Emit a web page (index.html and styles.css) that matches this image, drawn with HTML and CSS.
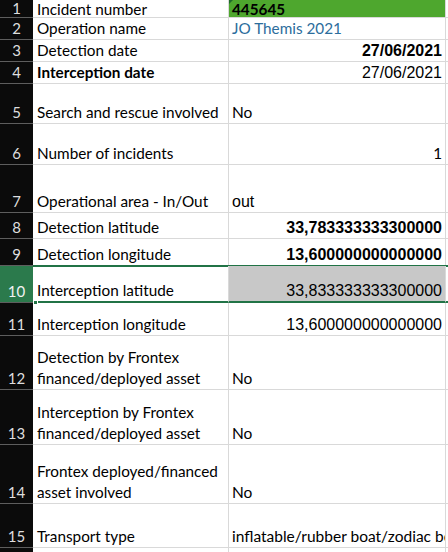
FILE: index.html
```html
<!DOCTYPE html>
<html>
<head>
<meta charset="utf-8">
<link rel="stylesheet" href="styles.css">
</head>
<body>
<div class="sheet">
  <div class="row r1">
    <div class="hdr">1</div>
    <div class="cell a">Incident number</div>
    <div class="cell b fill-green bold num-a"><span class="tri"></span>445645</div>
    <div class="cell c"></div>
  </div>
  <div class="row r2">
    <div class="hdr">2</div>
    <div class="cell a">Operation name</div>
    <div class="cell b blue">JO Themis 2021</div>
    <div class="cell c"></div>
  </div>
  <div class="row r3">
    <div class="hdr">3</div>
    <div class="cell a">Detection date</div>
    <div class="cell b right arial bold">27/06/2021</div>
    <div class="cell c"></div>
  </div>
  <div class="row r4">
    <div class="hdr">4</div>
    <div class="cell a bold">Interception date</div>
    <div class="cell b right arial">27/06/2021</div>
    <div class="cell c"></div>
  </div>
  <div class="row r5">
    <div class="hdr">5</div>
    <div class="cell a">Search and rescue involved</div>
    <div class="cell b cal">No</div>
    <div class="cell c"></div>
  </div>
  <div class="row r6">
    <div class="hdr">6</div>
    <div class="cell a">Number of incidents</div>
    <div class="cell b right">1</div>
    <div class="cell c"></div>
  </div>
  <div class="row r7">
    <div class="hdr">7</div>
    <div class="cell a">Operational area - In/Out</div>
    <div class="cell b arial">out</div>
    <div class="cell c"></div>
  </div>
  <div class="row r8">
    <div class="hdr">8</div>
    <div class="cell a">Detection latitude</div>
    <div class="cell b right arial bold">33,783333333300000</div>
    <div class="cell c"></div>
  </div>
  <div class="row r9">
    <div class="hdr">9</div>
    <div class="cell a">Detection longitude</div>
    <div class="cell b right arial bold">13,600000000000000</div>
    <div class="cell c"></div>
  </div>
  <div class="row r10 selected">
    <div class="hdr hdr-sel">10</div>
    <div class="cell a">Interception latitude</div>
    <div class="cell b right arial fill-grey">33,833333333300000</div>
    <div class="cell c"></div>
    <span class="handle"></span>
  </div>
  <div class="row r11">
    <div class="hdr">11</div>
    <div class="cell a">Interception longitude</div>
    <div class="cell b right arial">13,600000000000000</div>
    <div class="cell c"></div>
  </div>
  <div class="row r12">
    <div class="hdr">12</div>
    <div class="cell a">Detection by Frontex<br>financed/deployed asset</div>
    <div class="cell b cal">No</div>
    <div class="cell c"></div>
  </div>
  <div class="row r13">
    <div class="hdr">13</div>
    <div class="cell a">Interception by Frontex<br>financed/deployed asset</div>
    <div class="cell b cal">No</div>
    <div class="cell c"></div>
  </div>
  <div class="row r14">
    <div class="hdr">14</div>
    <div class="cell a">Frontex deployed/financed<br>asset involved</div>
    <div class="cell b cal">No</div>
    <div class="cell c"></div>
  </div>
  <div class="row r15">
    <div class="hdr">15</div>
    <div class="cell a">Transport type</div>
    <div class="cell b cal nowrap">inflatable/rubber boat/zodiac bo</div>
    <div class="cell c"></div>
  </div>
  <div class="row r16">
    <div class="hdr"></div>
    <div class="cell a"></div>
    <div class="cell b"></div>
    <div class="cell c"></div>
  </div>
</div>
</body>
</html>
```

FILE: styles.css
```css
html, body {
  margin: 0;
  padding: 0;
  background: #ffffff;
  overflow: hidden;
}

.sheet {
  width: 448px;
  font-family: "Lato", "Noto Sans", sans-serif;
  font-size: 15.3px;
  color: #000;
}

.row {
  display: grid;
  grid-template-columns: 33px 196px 217px 1fr;
  position: relative;
}

.r1 { height: 18px; }
.r2 { height: 22px; }
.r3 { height: 22px; }
.r4 { height: 22px; }
.r5 { height: 40px; }
.r6 { height: 41px; }
.r7 { height: 48px; }
.r8 { height: 26px; }
.r9 { height: 27px; }
.r10 { height: 37px; }
.r11 { height: 33px; }
.r12 { height: 54px; }
.r13 { height: 55px; }
.r14 { height: 59px; }
.r15 { height: 44px; }
.r16 { height: 30px; }

.hdr {
  background: #0b0b0b;
  color: #dedede;
  border-bottom: 1px solid #5e5e5e;
  font-size: 15px;
  display: flex;
  align-items: flex-end;
  justify-content: center;
  padding-bottom: 2px;
  line-height: 18px;
  box-sizing: border-box;
}

.hdr-sel {
  background: #2b7a4c;
  color: #f2f2f2;
}

.cell {
  border-bottom: 1px solid #d9d9d9;
  border-right: 1px solid #d9d9d9;
  display: flex;
  flex-direction: column;
  justify-content: flex-end;
  line-height: 21px;
  padding: 0 3px 0 4px;
  box-sizing: border-box;
  white-space: nowrap;
  overflow: hidden;
  position: relative;
}

.r1 .cell { line-height: 16px; }
.r1 .hdr { line-height: 16px; padding-bottom: 1px; }

.cell.b { padding-left: 3px; }
.cell.c { border-right: none; }

.right { align-items: flex-end; text-align: right; }
.bold { font-weight: bold; }
.arial { font-family: "Liberation Sans", Arial, sans-serif; font-size: 16px; }
.cal { font-family: "Lato", sans-serif; font-size: 15.5px; }
.blue { color: #2c6d9c; }
.nowrap { overflow: hidden; }

.fill-green { background: #4ea72e; }
.fill-grey { background: #c8c8c8; }

.tri {
  position: absolute;
  left: 0;
  top: 0;
  width: 0;
  height: 0;
  border-top: 4px solid #1f6b2a;
  border-right: 4px solid transparent;
}

.selected .cell {
  border-bottom: 2px solid #217346;
}
.selected::before {
  content: "";
  position: absolute;
  left: 33px;
  right: 0;
  top: -1px;
  height: 2px;
  background: #217346;
}
.handle {
  position: absolute;
  left: 33px;
  bottom: -2px;
  width: 5px;
  height: 5px;
  background: #217346;
  border: 1px solid #ffffff;
  box-sizing: border-box;
}
```
